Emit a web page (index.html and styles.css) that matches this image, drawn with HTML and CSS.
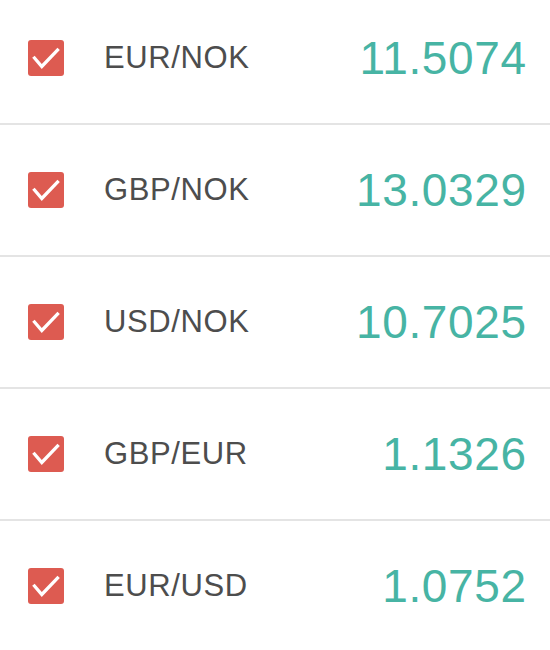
FILE: index.html
```html
<!DOCTYPE html>
<html>
<head>
<meta charset="utf-8">
<link rel="stylesheet" href="styles.css">
</head>
<body>
<ul class="rates">
  <li class="row">
    <span class="check"><svg viewBox="0 0 36 36" width="36" height="36"><path d="M6.5 18 L13.8 26.5 L29.5 10" fill="none" stroke="#fff" stroke-width="3.3" stroke-linecap="square"/></svg></span>
    <span class="pair">EUR/NOK</span>
    <span class="rate">11.5074</span>
  </li>
  <li class="row">
    <span class="check"><svg viewBox="0 0 36 36" width="36" height="36"><path d="M6.5 18 L13.8 26.5 L29.5 10" fill="none" stroke="#fff" stroke-width="3.3" stroke-linecap="square"/></svg></span>
    <span class="pair">GBP/NOK</span>
    <span class="rate">13.0329</span>
  </li>
  <li class="row">
    <span class="check"><svg viewBox="0 0 36 36" width="36" height="36"><path d="M6.5 18 L13.8 26.5 L29.5 10" fill="none" stroke="#fff" stroke-width="3.3" stroke-linecap="square"/></svg></span>
    <span class="pair">USD/NOK</span>
    <span class="rate">10.7025</span>
  </li>
  <li class="row">
    <span class="check"><svg viewBox="0 0 36 36" width="36" height="36"><path d="M6.5 18 L13.8 26.5 L29.5 10" fill="none" stroke="#fff" stroke-width="3.3" stroke-linecap="square"/></svg></span>
    <span class="pair">GBP/EUR</span>
    <span class="rate">1.1326</span>
  </li>
  <li class="row">
    <span class="check"><svg viewBox="0 0 36 36" width="36" height="36"><path d="M6.5 18 L13.8 26.5 L29.5 10" fill="none" stroke="#fff" stroke-width="3.3" stroke-linecap="square"/></svg></span>
    <span class="pair">EUR/USD</span>
    <span class="rate">1.0752</span>
  </li>
</ul>
</body>
</html>
```
FILE: styles.css
```css
html, body {
  margin: 0;
  padding: 0;
  background: #fff;
  overflow: hidden;
}
body {
  font-family: "Liberation Sans", Arial, Helvetica, sans-serif;
}
.rates {
  list-style: none;
  margin: -7px 0 0 0;
  padding: 0;
}
.row {
  display: flex;
  align-items: center;
  height: 130px;
  border-bottom: 2px solid #e4e4e4;
  padding: 0 24px 0 28px;
}
.check {
  width: 36px;
  height: 36px;
  border-radius: 3px;
  background: #dd5b51;
  display: flex;
  flex: none;
}
.check svg {
  display: block;
}
.pair {
  margin-left: 40px;
  font-size: 31px;
  letter-spacing: 0.6px;
  color: #4d4d4d;
  flex: 1;
}
.rate {
  font-size: 46px;
  letter-spacing: 0.6px;
  margin-right: -0.6px;
  color: #47b4a4;
}
```
